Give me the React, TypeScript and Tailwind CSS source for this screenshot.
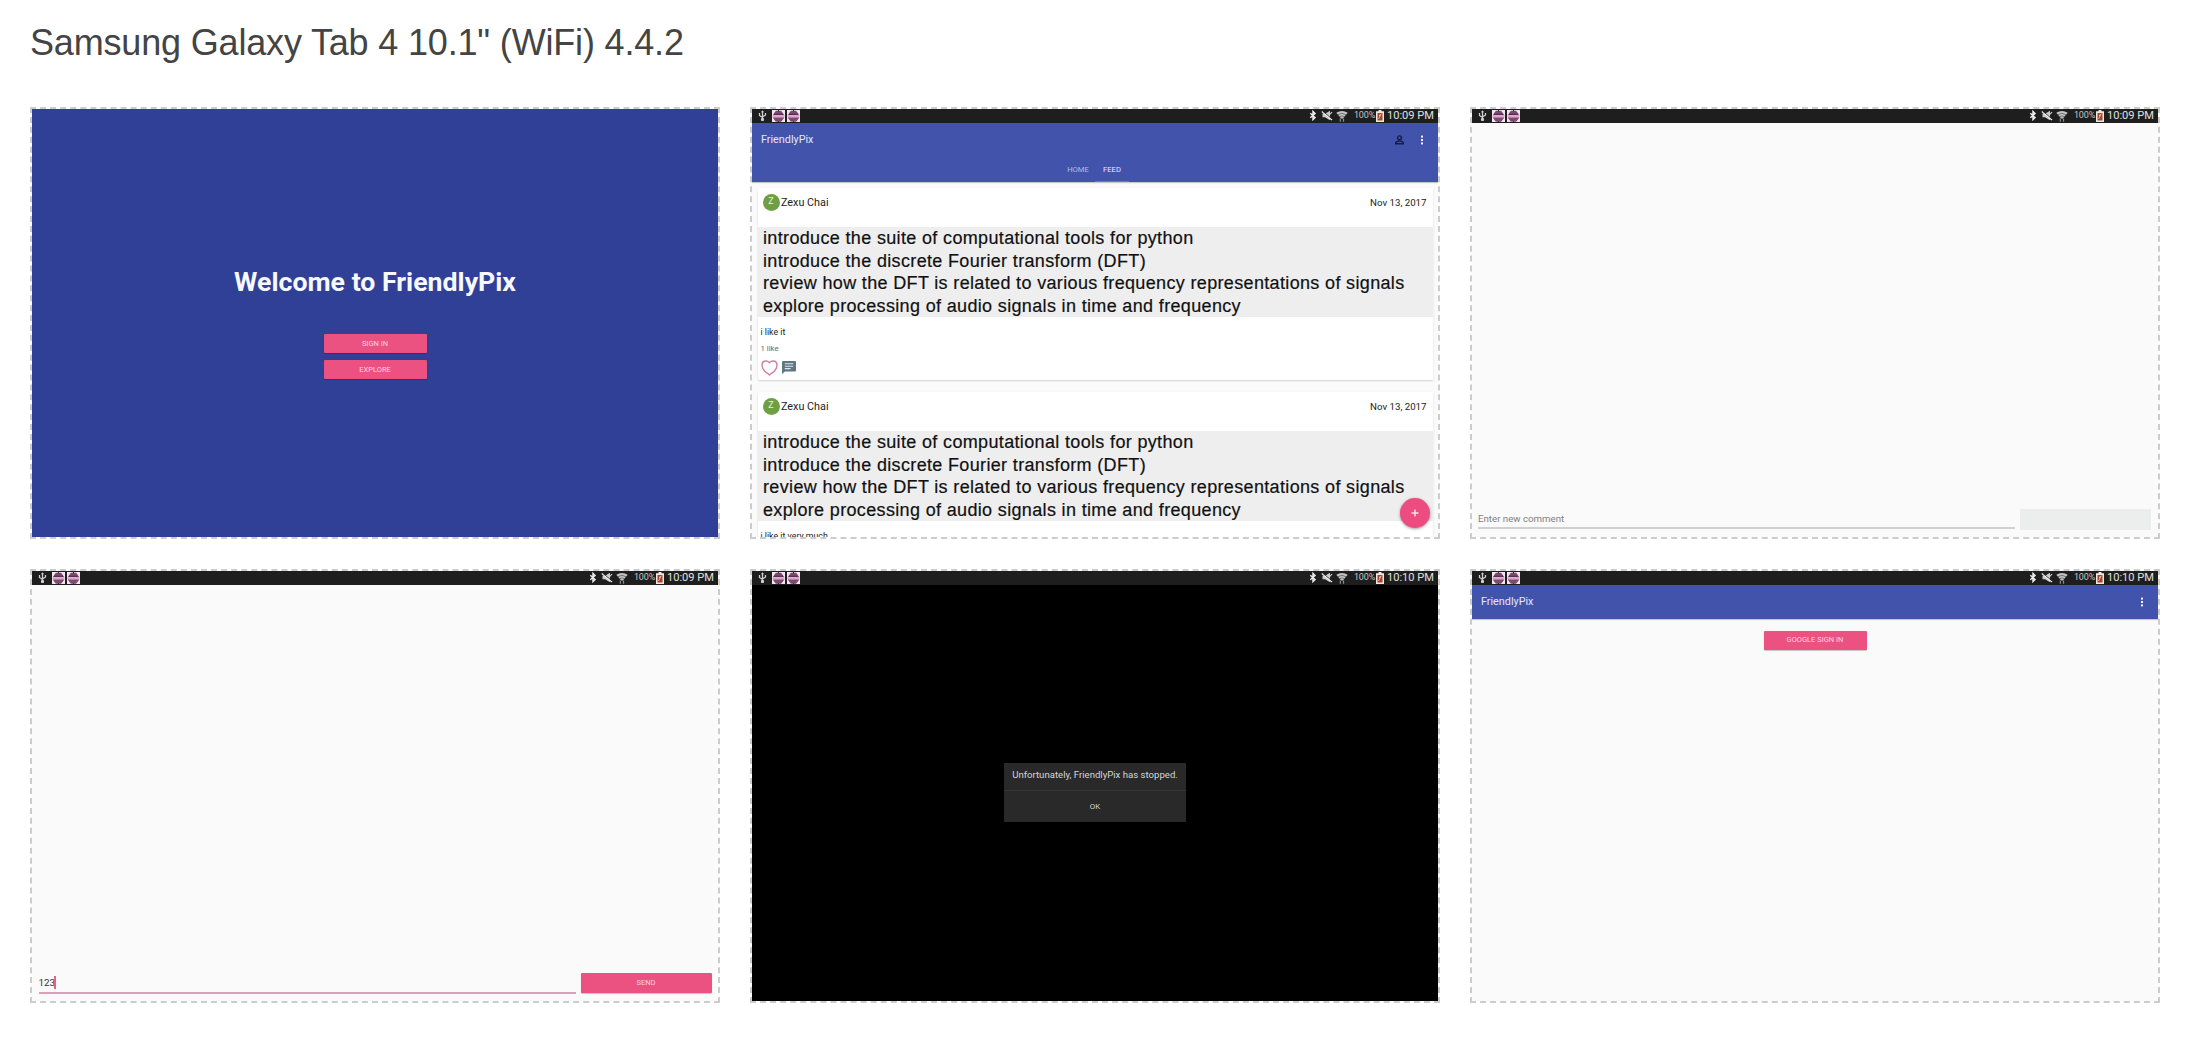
import React from "react";

type FrameProps = { className?: string; children?: React.ReactNode };

function Frame({ className = "", children }: FrameProps) {
  return (
    <section className="h-full w-[690px] border-2 border-dashed border-[#ccc]">
      <div className={`relative flex h-full w-full flex-col overflow-hidden ${className}`}>{children}</div>
    </section>
  );
}

function BugIcon() {
  return (
    <svg className="mr-[2px] h-[12.5px] w-[13px]" viewBox="0 0 12 12" preserveAspectRatio="none">
      <rect width="12" height="12" fill="#f3e6f0" />
      <path d="M2.2 2.6 3.6.8h4.800l1.400 1.800L11.400 5H.6zM.6 7h10.800L9.900 9.400 8.400 11.200H3.600L2.100 9.400z" fill="#7d4a70" />
      <path d="M.6 5h10.800v2H.6z" fill="#e0a5cf" />
      <path d="M6 0v1.500M6 10.500V12M2 4h8" stroke="#4b2b45" strokeWidth="1" />
    </svg>
  );
}

function StatusBar({ time }: { time: string }) {
  return (
    <div className="flex h-[13.5px] shrink-0 items-center bg-[#1e1e1e] pl-[6px] pr-[4px] font-[Roboto,sans-serif] text-[#e0e0e0]">
      <svg className="mr-[4.5px] h-[11px] w-[9px]" viewBox="0 0 9 11" fill="none" stroke="#cfcfcf" strokeWidth="1.3">
        <path d="M4.5 10V1M1.500 3v2.500l3 2M7.500 3v2l-3 2" />
        <circle cx="4.500" cy="9.500" r="1" fill="#cfcfcf" />
        <path d="M3 2.200 4.500.3 6 2.200z" fill="#cfcfcf" stroke="none" />
      </svg>
      <BugIcon />
      <BugIcon />
      <div className="flex-1" />
      <svg className="mr-[4px] h-[11px] w-[8px]" viewBox="0 0 8 10" fill="none" stroke="#ececec" strokeWidth="1.5">
        <path d="M1.300 2.800 6 7 4 9V1l2 2-4.700 4.200" />
      </svg>
      <svg className="mr-[3px] h-[11px] w-[12px]" viewBox="0 0 12 10">
        <path d="M1.500 3.200H4L9 .3v9.400L4 6.800H1.500z" fill="#c9c9c9" />
        <path d="m.8 1 10.200 8.500" stroke="#f0f0f0" strokeWidth="1.300" />
        <path d="M1.800.8 10.800 8.200" stroke="#1e1e1e" strokeWidth=".7" />
        <path d="M8.800 4 11 1.500" stroke="#e0e0e0" strokeWidth="1.100" />
      </svg>
      <svg className="mr-[6px] h-[12.5px] w-[12px]" viewBox="0 0 12 12" fill="none">
        <path d="M.3 2.600Q6-1 11.700 2.600L6.800 8.200H5.200z" fill="#c4c4c4" />
        <path d="M1.900 4.500Q6 1.700 10.100 4.500M3.600 6.400q2.400-1.500 4.800 0" stroke="#3a3a3a" strokeWidth=".6" />
        <path d="M4.300 8.300v3.200M7.500 8.300v3.200" stroke="#8d8d8d" strokeWidth="1.200" />
      </svg>
      <span className="mr-[1px] w-[21px] whitespace-nowrap text-[9px] leading-[13px] tracking-[-0.15px] text-[#c4c4c4]">100%</span>
      <svg className="mr-[3px] h-[12px] w-[8px]" viewBox="0 0 8 12">
        <path d="M2.500 0h3v1.200H8V12H0V1.200h2.500z" fill="#efe6e2" />
        <path d="M1.500 3h5v7.500h-5z" fill="#a8432b" />
        <path d="m2.500 9 2-3.600H3L5.500 4" stroke="#efd3ca" strokeWidth=".8" fill="none" />
      </svg>
      <span className="whitespace-nowrap text-[11.1px] leading-[13px]">{time}</span>
    </div>
  );
}

function More() {
  return (
    <svg className="h-[10px] w-[4px]" viewBox="0 0 4 10" fill="#f1f2fa">
      <rect x="1" y=".6" width="2" height="2" />
      <rect x="1" y="4" width="2" height="2" />
      <rect x="1" y="7.400" width="2" height="2" />
    </svg>
  );
}

function PinkButton({ className = "", children }: FrameProps) {
  return (
    <div
      className={`flex shrink-0 items-center justify-center rounded-[1px] bg-[#eb5282] font-[Roboto,sans-serif] text-[7.5px] text-[#fbd3e0] shadow-[0_1px_1px_rgba(0,0,0,0.22)] ${className}`}
    >
      {children}
    </div>
  );
}

const LINES = [
  "introduce the suite of computational tools for python",
  "introduce the discrete Fourier transform (DFT)",
  "review how the DFT is related to various frequency representations of signals",
  "explore processing of audio signals in time and frequency",
];

function Post({ caption }: { caption: string }) {
  return (
    <article className="mx-[5.5px] mb-[11.5px] h-[192.5px] shrink-0 rounded-[1px] bg-white font-[Roboto,sans-serif] text-[#222] shadow-[0_1px_2px_rgba(0,0,0,0.16)]">
      <header className="flex h-[39.5px] items-start pl-[5px] pr-[6px] pt-[6px]">
        <div className="mr-[1.5px] flex size-[17px] items-center justify-center rounded-full bg-[#6f9f45] text-[9px] text-[#e6f0dd]">Z</div>
        <span className="text-[10.8px] leading-[17px]">Zexu Chai</span>
        <span className="ml-auto text-[9.7px] leading-[17px]">Nov 13, 2017</span>
      </header>
      <div className="h-[89.5px] bg-[#eee] pl-[5.5px] font-['Liberation_Sans',Arial,sans-serif] text-[18px] leading-[22.7px] tracking-[0.345px] text-[#111]">
        {LINES.map((l) => (
          <div key={l} className="whitespace-nowrap [-webkit-text-stroke:0.2px_#111]">{l}</div>
        ))}
      </div>
      <div className="pl-[3px]">
        <div className="pt-[9px] text-[8.8px] leading-[12px]">{caption}</div>
        <div className="pt-[6px] text-[7.800px] leading-[10px] text-[#666]">1 like</div>
        <div className="flex items-center gap-[4px] pt-[6px]">
          <svg className="h-[16px] w-[17px]" viewBox="0 0 17 16" fill="none" stroke="#cf7fa2" strokeWidth="1.4">
            <path d="M8.500 15C7.300 13.700 5.500 13 3.800 11.200 2.200 9.500 1 7.500 1 5.200 1 2.600 2.800 1 4.900 1c1.600 0 2.900.7 3.600 1.600C9.200 1.700 10.500 1 12.100 1 14.200 1 16 2.600 16 5.200c0 2.300-1.200 4.300-2.800 6C11.500 13 9.700 13.700 8.500 15z" />
          </svg>
          <svg className="h-[13px] w-[14px]" viewBox="0 0 14 13">
            <path d="M1 0h12a1 1 0 0 1 1 1v8.500a1 1 0 0 1-1 1H3L0 13V1a1 1 0 0 1 1-1z" fill="#5d7784" />
            <path d="M2.800 2.800h8.400M2.800 5.200h8.400M2.800 7.600h5.800" stroke="#dfe7ea" strokeWidth="1.100" />
          </svg>
        </div>
      </div>
    </article>
  );
}

export default function App() {
  return (
    <main className="h-[1042px] w-[2200px] overflow-hidden bg-white pl-[30px]">
      <h1 className="h-[107px] pt-[23px] font-['Liberation_Sans',Arial,sans-serif] text-[36px] leading-[40px] tracking-[-0.17px] text-[#444]">
        Samsung Galaxy Tab 4 10.1" (WiFi) 4.4.2
      </h1>
      <div className="grid grid-cols-[690px_690px_690px] grid-rows-[432px_434px] gap-[30px]">
        <Frame className="items-center bg-[#304097]">
          <div className="mt-[156px] h-[69px] whitespace-nowrap font-[Roboto,sans-serif] text-[26.700px] font-bold leading-[34px] text-[#f7f8ff]">
            Welcome to FriendlyPix
          </div>
          <PinkButton className="h-[19px] w-[103px]">SIGN IN</PinkButton>
          <PinkButton className="mt-[7px] h-[19px] w-[103px]">EXPLORE</PinkButton>
        </Frame>

        <Frame className="bg-[#fafafa]">
          <StatusBar time="10:09 PM" />
          <div className="flex h-[59px] shrink-0 flex-col bg-[#4253ac] font-[Roboto,sans-serif] shadow-[0_1px_1px_rgba(0,0,0,0.2)]">
            <div className="flex h-[34px] items-center pl-[9px] pr-[14px]">
              <span className="pt-[2px] text-[10.800px] text-[#e6e8f6]">FriendlyPix</span>
              <svg className="ml-auto mr-[16px] h-[10px] w-[9px]" viewBox="0 0 9 10" fill="none" stroke="#161c4b" strokeWidth="1.400">
                <circle cx="4.500" cy="2.800" r="1.900" />
                <path d="M.7 8.800V7.500Q2 6 4.500 6T8.300 7.500v1.300z" />
              </svg>
              <More />
            </div>
            <div className="flex h-[25px] justify-center text-[7.600px] leading-[25px]">
              <div className="w-[34px] text-center text-[#b4bbe0]">HOME</div>
              <div className="w-[34px] border-b border-[#b0609f] text-center text-[#e6e8f6]">FEED</div>
            </div>
          </div>
          <div className="flex flex-col pt-[6px]">
            <Post caption="i like it" />
            <Post caption="i like it very much" />
          </div>
          <div className="absolute left-[648px] top-[389px] flex size-[30px] items-center justify-center rounded-full bg-[#ec4c80] shadow-[0_1px_3px_rgba(0,0,0,0.4)]">
            <svg className="size-[8px]" viewBox="0 0 8 8" stroke="#fbdde8" strokeWidth="1.500">
              <path d="M4 .5v7M.5 4h7" />
            </svg>
          </div>
        </Frame>

        <Frame className="bg-[#fafafa]">
          <StatusBar time="10:09 PM" />
          <div className="mt-auto flex h-[28px] items-start pl-[6px] font-[Roboto,sans-serif]">
            <div className="mr-[5px] h-[20px] w-[537px] border-b-2 border-[#d0d0d0] pt-[3px] text-[9.700px] leading-[14px] text-[#808080]">
              Enter new comment
            </div>
            <div className="h-[20.500px] w-[131px] bg-[#eceeee]" />
          </div>
        </Frame>

        <Frame className="bg-[#fafafa]">
          <StatusBar time="10:09 PM" />
          <div className="mt-auto flex h-[28px] items-start pl-[6.500px] font-[Roboto,sans-serif]">
            <div className="mr-[5px] flex h-[21px] w-[537px] items-start border-b-2 border-[#d9a0b8] pt-[3px] text-[9.900px] leading-[14px] text-[#333]">
              123
              <div className="-ml-px h-[13px] w-[1.500px] bg-[#d8668f]" />
            </div>
            <PinkButton className="h-[20px] w-[131px]">SEND</PinkButton>
          </div>
        </Frame>

        <Frame className="items-center bg-black">
          <div className="w-full"><StatusBar time="10:10 PM" /></div>
          <div className="mt-[178px] flex h-[59.500px] w-[182px] flex-col whitespace-nowrap bg-[#292929] text-center font-[Roboto,sans-serif] text-[#d6d6d6]">
            <div className="h-[30px] border-b border-[#363636] pt-[3px] text-[9.600px] leading-[17px]">Unfortunately, FriendlyPix has stopped.</div>
            <div className="text-[7.800px] leading-[31px]">OK</div>
          </div>
        </Frame>

        <Frame className="bg-[#fafafa]">
          <StatusBar time="10:10 PM" />
          <div className="flex h-[34px] shrink-0 items-center bg-[#4253ac] pl-[9px] pr-[14px] font-[Roboto,sans-serif] text-[10.800px] text-[#e6e8f6] shadow-[0_1px_1px_rgba(0,0,0,0.2)]">
            <span className="mr-auto pt-px">FriendlyPix</span>
            <More />
          </div>
          <PinkButton className="mt-[12px] h-[19px] w-[103px] self-center">GOOGLE SIGN IN</PinkButton>
        </Frame>
      </div>
    </main>
  );
}
